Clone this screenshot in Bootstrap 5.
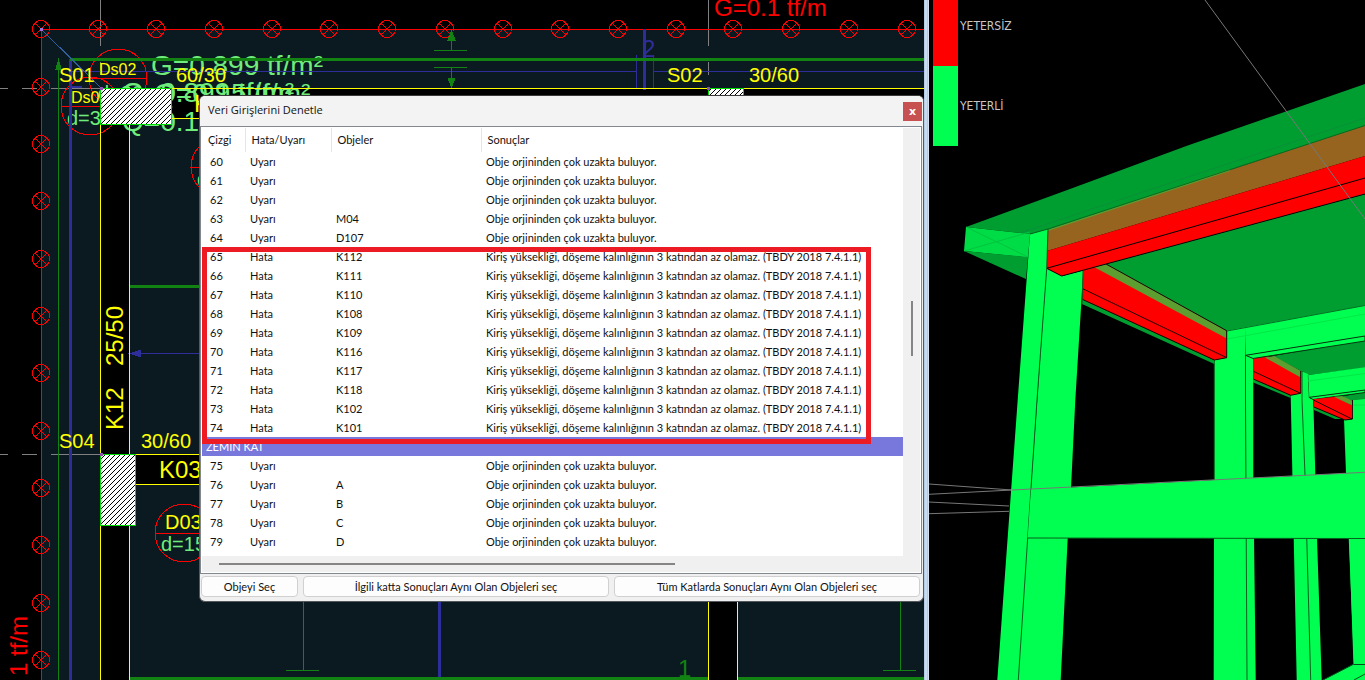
<!DOCTYPE html>
<html lang="tr">
<head>
<meta charset="utf-8">
<meta name="viewport" content="width=device-width, initial-scale=1">
<title>Veri Girişlerini Denetle</title>
<link href="https://cdn.jsdelivr.net/npm/bootstrap@5.3.0/dist/css/bootstrap.min.css" rel="stylesheet">
<script src="https://cdn.jsdelivr.net/npm/bootstrap@5.3.0/dist/js/bootstrap.bundle.min.js"></script>
<style>
body { background: #000; font-family: Lato, "Liberation Sans", sans-serif; }
.workspace { display: grid; grid-template-columns: 924fr 5px 436fr; }
.workspace svg { font-family: "Liberation Sans", Arial, sans-serif; }
.splitter { background: linear-gradient(90deg, #b4cbe4 0 1px, #c9dbee 1px 3px, #b4c9e0 3px 4px, #d3e1f0 4px); }
.pane-view { min-width: 0; }

/* model legend */
.legend { top: 0; left: 4px; color: #c8c8c8; font: 12px/16px "DejaVu Sans Condensed", "DejaVu Sans", sans-serif; }
.legend-row { display: flex; gap: 2px; }
.swatch { width: 25px; }
.swatch-bad { height: 66px; background: #f00; }
.swatch-ok { height: 80px; background: #00ff50; }
.legend-bad { padding-top: 18px; }
.legend-ok { padding-top: 32px; }

/* check dialog */
.check-dialog { top: 95px; left: 199px; right: 0; background: #f0f0f0; border: 1px solid #55585c; border-top-color: #3a3a3a; border-radius: 6px; overflow: hidden; color: #111; font-size: 11px; }
.title-bar { height: 30px; background: #f3f3f3; padding: 0 1px 0 8px; }
.title-bar h1 { margin: 0; font: 11px/28px "Open Sans", sans-serif; }
.close-btn { width: 19px; height: 19px; margin-top: 6px; border: 0; border-radius: 0; padding: 0; background: #c75050; color: #fff; font: bold 11px/17px "DejaVu Sans", sans-serif; }
.list-box { margin-right: 1px; border: 1px solid #828790; background: #fff; padding: 1px; }
.scroll-v { width: 17px; background: #f0f0f0; padding: 173px 0 0 8px; }
.scroll-v span { display: block; width: 2px; height: 55px; background: #858585; }
.scroll-h { height: 16px; background: #f0f0f0; padding: 7px 0 0 17px; }
.scroll-h span { display: block; width: 65%; height: 2px; background: #858585; }
.data-grid { table-layout: fixed; margin: 0; color: #111; height: 428px; }
.data-grid > :not(caption) > * > * { padding: 0 0 0 5px; border: 0; line-height: 19px; height: 19px; background: none; white-space: nowrap; box-shadow: none; color: inherit; }
.data-grid > thead > tr > th { height: 24px; line-height: 24px; font-weight: 400; padding-left: 6px; border-left: 1px solid #e5e5e5; }
.data-grid > thead > tr > th:first-child { border-left: 0; }
.data-grid > tbody > tr > td:first-child { padding-left: 8px; }
.data-grid > tbody > tr.floor-row > th { background: #7878dc; color: #fff; font-weight: 400; padding-left: 4px; }
.data-grid > tbody > tr.spacer-row > td { height: 5px; line-height: 5px; }
.error-frame { top: 120px; left: 1px; right: 50px; height: 197px; border: 5px solid #ed1c24; pointer-events: none; }
.actions { display: grid; grid-template-columns: 97px 1fr 1fr; gap: 5px; padding: 2px 3px 4px 1px; }
.action-btn { height: 21px; padding: 0; border: 1px solid #d0d0d0; border-radius: 4px; background: #fdfdfd; color: #111; font-size: 11px; line-height: 19px; white-space: nowrap; }
</style>
</head>
<body>
<main class="workspace vh-100 overflow-hidden">

<section class="pane-view position-relative" aria-label="Plan">
<svg class="d-block w-100 h-100" viewBox="0 0 924 680" preserveAspectRatio="xMinYMin slice" shape-rendering="crispEdges">
  <defs>
    <pattern id="hatch" width="5" height="5" patternUnits="userSpaceOnUse">
      <rect width="5" height="5" fill="#fff"/><path d="M-1 6L6-1M-1 1L1-1M4 6L6 4" stroke="#000"/>
    </pattern>
    <g id="load" fill="none" stroke="#f00"><circle r="8.5"/><path d="M-6-6L6 6M6-6L-6 6"/></g>
  </defs>
  <rect width="924" height="680" fill="#000"/>
  <path d="M41 29H924V680H41Z" fill="#0b1a20"/>
  <!-- beams -->
  <path d="M100 88H924V118H129V680H100ZM129 454H220V484H129ZM708 590H737V680H708Z" fill="#000"/>
  <!-- axes -->
  <path d="M100.500 0V46M100.500 62V75M708.500 0V46M708.500 62V75M0 88.500H8M22 88.500H37M51 88.500H100M0 454.500H8M22 454.500H37M51 454.500H100" stroke="#808080" fill="none"/>
  <path d="M41.500 29V680M41 29.500H924" stroke="#f00"/>
  <g>
    <use href="#load" x="41" y="29"/><use href="#load" x="98" y="29"/><use href="#load" x="156" y="29"/><use href="#load" x="214" y="29"/><use href="#load" x="272" y="29"/><use href="#load" x="329" y="29"/><use href="#load" x="387" y="29"/><use href="#load" x="445" y="29"/><use href="#load" x="503" y="29"/><use href="#load" x="560" y="29"/><use href="#load" x="618" y="29"/><use href="#load" x="676" y="29"/><use href="#load" x="733" y="29"/><use href="#load" x="791" y="29"/><use href="#load" x="849" y="29"/><use href="#load" x="907" y="29"/>
    <use href="#load" x="41" y="87"/><use href="#load" x="41" y="144"/><use href="#load" x="41" y="201"/><use href="#load" x="41" y="259"/><use href="#load" x="41" y="316"/><use href="#load" x="41" y="373"/><use href="#load" x="41" y="431"/><use href="#load" x="41" y="488"/><use href="#load" x="41" y="545"/><use href="#load" x="41" y="603"/><use href="#load" x="41" y="660"/>
  </g>
  <!-- slab labels -->
  <g fill="#70ec7c">
    <text x="151" y="75" font-size="28">G=0.899 tf/m²</text>
    <text x="122" y="102" font-size="28">G=0.899 tf/m²</text>
    <text x="154" y="103" font-size="28">Q=0.15 tf/m²</text>
    <text x="122" y="131" font-size="28">Q=0.15</text>
    <text x="98" y="100" font-size="20">d=30</text>
    <text x="67" y="125" font-size="20">d=30</text>
    <text x="161" y="551" font-size="20">d=15</text>
    <text x="197" y="186" font-size="20">d=15</text>
  </g>
  <g fill="none" stroke="#f00">
    <circle cx="118" cy="78" r="29"/><circle cx="90" cy="106" r="29"/><circle cx="184" cy="533" r="29"/><circle cx="220" cy="167" r="29"/>
    <path d="M89 78.500H147M61 106.500H119M155 533.500H213M190 167.500H240"/>
  </g>
  <!-- reinforcement lines -->
  <g fill="none" stroke="#2e2e9a">
    <path d="M70.500 59V680" stroke-width="3"/><path d="M644.500 29V90M439.500 590V680" stroke-width="3"/>
    <path d="M70 71.500H636M653 71.500H924M636.500 55V88M653.500 55V88M129 353.500H210"/>
    <path d="M70 87H82" stroke-width="2"/><path d="M130 353.500L140 350.500V356.500Z" fill="#2e2e9a"/>
  </g>
  <g fill="none" stroke="#128212">
    <path d="M70 59.500H924M129 286.500H210M129 678.500H708M737 678.500H924" stroke-width="3"/>
    <path d="M58.500 62V680M434 50.500H467M434 67.500H467M451.500 32V50M451.500 67V88M303.500 600V670M286 670.500H319M900.500 600V670M883 670.500H916"/>
    <path d="M58.500 60L56 69H61ZM451.500 31L448 40H455ZM451.500 87L448 78H455Z" fill="#128212"/>
  </g>
  <path d="M41 29L101 88" stroke="#3060a0"/>
  <rect x="40" y="28" width="3" height="3" fill="#a070e0"/>
  <!-- beam outlines -->
  <path d="M172 88.500H924M172 118.500H924M100.500 124V680M129.500 124V680M129 454.500H220M129 484.500H220M708.500 590V680M737.500 590V680" fill="none" stroke="#ff0"/>
  <g fill="url(#hatch)" stroke="#00e000"><rect x="100.500" y="88.500" width="71" height="36"/><rect x="100.500" y="454.500" width="35" height="71"/><rect x="708.500" y="88.500" width="35" height="36"/></g>
  <path d="M100 87h3v3h-3zM100 453h3v3h-3zM707 87h3v3h-3z" fill="#9050b0"/>
  <g fill="#ff0" font-size="20">
    <text x="59" y="82">S01</text><text x="176" y="82">60/30</text><text x="667" y="82">S02</text><text x="749" y="82">30/60</text>
    <text x="59" y="448">S04</text><text x="141" y="448">30/60</text><text x="165" y="529">D03</text>
    <text x="99" y="75" font-size="16">Ds02</text><text x="71" y="103" font-size="16">Ds0</text>
    <text x="159" y="478" font-size="24">K03</text><text x="194" y="112" font-size="24">K01</text>
    <text transform="translate(123 430) rotate(-90)" font-size="24">K12</text>
    <text transform="translate(123 366) rotate(-90)" font-size="24">25/50</text>
  </g>
  <text x="642" y="57" font-size="24" fill="#2e2e9a">2</text>
  <text x="678" y="677" font-size="24" fill="#128212">1</text>
  <g fill="#f00" font-size="24"><text x="714" y="16">G=0.1 tf/m</text><text transform="translate(27 676) rotate(-90)">1 tf/m</text></g>
</svg>

<div class="check-dialog position-absolute" role="dialog" aria-labelledby="dlgTitle">
  <div class="title-bar d-flex justify-content-between align-items-start">
    <h1 id="dlgTitle">Veri Girişlerini Denetle</h1>
    <button type="button" class="close-btn" aria-label="Kapat">x</button>
  </div>
  <div class="list-box position-relative">
    <div class="d-flex">
      <table class="table data-grid flex-grow-1">
        <colgroup><col style="width:43px"><col style="width:86px"><col style="width:150px"><col></colgroup>
        <thead><tr><th scope="col">Çizgi</th><th scope="col">Hata/Uyarı</th><th scope="col">Objeler</th><th scope="col">Sonuçlar</th></tr></thead>
        <tbody>
          <tr><td>60</td><td>Uyarı</td><td></td><td>Obje orjininden çok uzakta buluyor.</td></tr>
          <tr><td>61</td><td>Uyarı</td><td></td><td>Obje orjininden çok uzakta buluyor.</td></tr>
          <tr><td>62</td><td>Uyarı</td><td></td><td>Obje orjininden çok uzakta buluyor.</td></tr>
          <tr><td>63</td><td>Uyarı</td><td>M04</td><td>Obje orjininden çok uzakta buluyor.</td></tr>
          <tr><td>64</td><td>Uyarı</td><td>D107</td><td>Obje orjininden çok uzakta buluyor.</td></tr>
          <tr><td>65</td><td>Hata</td><td>K112</td><td>Kiriş yüksekliği, döşeme kalınlığının 3 katından az olamaz. (TBDY 2018 7.4.1.1)</td></tr>
          <tr><td>66</td><td>Hata</td><td>K111</td><td>Kiriş yüksekliği, döşeme kalınlığının 3 katından az olamaz. (TBDY 2018 7.4.1.1)</td></tr>
          <tr><td>67</td><td>Hata</td><td>K110</td><td>Kiriş yüksekliği, döşeme kalınlığının 3 katından az olamaz. (TBDY 2018 7.4.1.1)</td></tr>
          <tr><td>68</td><td>Hata</td><td>K108</td><td>Kiriş yüksekliği, döşeme kalınlığının 3 katından az olamaz. (TBDY 2018 7.4.1.1)</td></tr>
          <tr><td>69</td><td>Hata</td><td>K109</td><td>Kiriş yüksekliği, döşeme kalınlığının 3 katından az olamaz. (TBDY 2018 7.4.1.1)</td></tr>
          <tr><td>70</td><td>Hata</td><td>K116</td><td>Kiriş yüksekliği, döşeme kalınlığının 3 katından az olamaz. (TBDY 2018 7.4.1.1)</td></tr>
          <tr><td>71</td><td>Hata</td><td>K117</td><td>Kiriş yüksekliği, döşeme kalınlığının 3 katından az olamaz. (TBDY 2018 7.4.1.1)</td></tr>
          <tr><td>72</td><td>Hata</td><td>K118</td><td>Kiriş yüksekliği, döşeme kalınlığının 3 katından az olamaz. (TBDY 2018 7.4.1.1)</td></tr>
          <tr><td>73</td><td>Hata</td><td>K102</td><td>Kiriş yüksekliği, döşeme kalınlığının 3 katından az olamaz. (TBDY 2018 7.4.1.1)</td></tr>
          <tr><td>74</td><td>Hata</td><td>K101</td><td>Kiriş yüksekliği, döşeme kalınlığının 3 katından az olamaz. (TBDY 2018 7.4.1.1)</td></tr>
          <tr class="floor-row"><th colspan="4">ZEMİN KAT</th></tr>
          <tr><td>75</td><td>Uyarı</td><td></td><td>Obje orjininden çok uzakta buluyor.</td></tr>
          <tr><td>76</td><td>Uyarı</td><td>A</td><td>Obje orjininden çok uzakta buluyor.</td></tr>
          <tr><td>77</td><td>Uyarı</td><td>B</td><td>Obje orjininden çok uzakta buluyor.</td></tr>
          <tr><td>78</td><td>Uyarı</td><td>C</td><td>Obje orjininden çok uzakta buluyor.</td></tr>
          <tr><td>79</td><td>Uyarı</td><td>D</td><td>Obje orjininden çok uzakta buluyor.</td></tr>
          <tr class="spacer-row"><td colspan="4"></td></tr>
        </tbody>
      </table>
      <div class="scroll-v flex-shrink-0"><span></span></div>
    </div>
    <div class="scroll-h"><span></span></div>
    <div class="error-frame position-absolute"></div>
  </div>
  <div class="actions">
    <button type="button" class="btn action-btn">Objeyi Seç</button>
    <button type="button" class="btn action-btn">İlgili katta Sonuçları Aynı Olan Objeleri seç</button>
    <button type="button" class="btn action-btn">Tüm Katlarda Sonuçları Aynı Olan Objeleri seç</button>
  </div>
</div>
</section>

<div class="splitter"></div>

<section class="pane-view position-relative" aria-label="Model">
<svg class="d-block w-100 h-100" viewBox="929 0 436 680" preserveAspectRatio="xMinYMin slice">
  <rect x="929" width="436" height="680" fill="#000"/>
  <g stroke="#777"><path d="M929 484L1012 490L929 494.300M929 502L1009 506M929 513.700L1009 511.300" fill="none"/></g>
  <!-- top slab -->
  <path d="M966 227L1070 189L1187 145.700L1365 84V126L1048 230L1030 234Z" fill="#009e30"/>
  <path d="M1020 233L1365 118" stroke="#0a9038"/>
  <path d="M1048 230L1365 125.500V156L1047 251Z" fill="#96641e"/>
  <path d="M1048 229.500L1230 169V171L1048 231Z" fill="#5c9e30"/>
  <path d="M1048 229L1365 125.500" stroke="#066a20"/>
  <path d="M966 227L1030 234L1028 257.500L964 251Z" fill="#00dc46"/>
  <path d="M966 227L1028 257M964 251L1030 232" stroke="#00c440" fill="none"/>
  <path d="M964 251L1028 257L1026 279Z" fill="#009e30"/>
  <!-- lower slabs -->
  <path d="M1061 275L1365 194V306L1227 331L1105 264Z" fill="#009e30"/>
  <path d="M1273 356L1365 340V368L1308 375L1301 371Z" fill="#009e30"/>
  <path d="M1340 397L1365 392V400L1352 400.500Z" fill="#009e30"/>
  <!-- far columns -->
  <path d="M1345 419L1352 418V400.500L1365 399V680H1354Z" fill="#00ff50"/>
  <path d="M1344 419L1346 473L1348.700 538L1354 664L1323 680H1365V400H1352V419Z" fill="#00ff50"/>
  <path d="M1354 664.500H1365M1354 680L1365 674M1354 664L1323 680" stroke="#044f18" fill="none"/>
  <path d="M1352 405H1365" stroke="#00e848"/>
  <path d="M1290.700 395L1301 393V371L1308.300 374.300L1309.300 398L1313.300 399.500L1315.300 475L1317 538L1321.700 680H1296.700L1293.700 538Z" fill="#00ff50"/>
  <path d="M1302 371V400L1305 475L1310.700 680M1308.300 375L1309.300 398" stroke="#045f1c" fill="none"/>
  <path d="M1308.300 375L1365 367.300V390L1309.300 397.300Z" fill="#00ff50"/>
  <path d="M1309.300 397.300L1365 390V392.500L1313 399.500Z" fill="#00ff50" stroke="#033810"/>
  <path d="M1308 381L1365 373.500" stroke="#00e848"/>
  <path d="M1313.300 399.300L1336 396.700L1352 405.500V419L1345 420L1314 407Z" fill="#f00"/>
  <path d="M1334 396.700L1342 396L1352 400.500V405.500Z" fill="#5c9e30"/>
  <path d="M1314 407L1343 419H1335L1314 410Z" fill="#009e30"/>
  <path d="M1313.300 400L1352 419M1314 407L1345 420L1352.500 419V400" stroke="#200" fill="none"/>
  <!-- middle bay -->
  <path d="M1253.300 358.300L1268 356L1301 377.700V393.300L1290.700 395.300L1253.300 379Z" fill="#f00"/>
  <path d="M1265 357.500L1274 356L1301 371V377.700Z" fill="#5c9e30"/>
  <path d="M1253.300 379L1290.700 395.300V398L1253.300 382.500Z" fill="#009e30"/>
  <path d="M1253.300 371.300L1300.500 393.300L1290.700 395.300L1253.300 379M1300.700 371V393" stroke="#200" fill="none"/>
  <path d="M1214.300 360L1226.700 357.700V330.700L1245 327.300V355.300L1253.300 358.500V475L1255.700 680H1213.700Z" fill="#00ff50"/>
  <path d="M1245.500 327V400L1247 680M1214.300 360V480" stroke="#045f1c" fill="none"/>
  <path d="M1245 327.300L1365 305.500V336L1245.700 355.300Z" fill="#00ff50"/>
  <path d="M1245.700 355.300L1365 336V341L1253 358.500Z" fill="#00ff50" stroke="#033810"/>
  <path d="M1227 339L1365 314" stroke="#00e848"/>
  <path d="M1227 331L1365 305.500" stroke="#057024"/>
  <!-- near bay -->
  <path d="M1083 269L1095 266L1226.700 338V357.700L1214.300 360L1082.300 299.300Z" fill="#f00"/>
  <path d="M1094 267L1106 264L1226.700 330.700V338.500Z" fill="#5c9e30"/>
  <path d="M1082.300 299.300L1214.300 360V364L1082 304Z" fill="#009e30"/>
  <path d="M1082.700 288.700L1226.700 357.700L1214.300 360L1082.300 299.300M1226.700 331V357.700M1106 264L1226.700 330.700" stroke="#200" fill="none"/>
  <path d="M1046.700 268L1062 276L1083.300 270.500L1075.300 400L1071 488L1067.700 538L1060.700 680H1015L1031 488Z" fill="#00ff50"/>
  <path d="M1047 251L1365 156V194L1061.700 276L1046.700 268.300Z" fill="#f00"/>
  <path d="M1365 194L1061.700 276L1046.700 268.300L1365 178" stroke="#000" fill="none"/>
  <path d="M1030 234L1048 229L1046.700 269L1037 400L1031 488L1018.300 680H997.300L1017.700 400Z" fill="#00ff50"/>
  <path d="M1030 234L1048 229L1046.700 269L1037 400L1031 488L1018.300 680M1083 271L1082 304" stroke="#045f1c" fill="none"/>
  <!-- floor beam -->
  <path d="M1031 489.500L1365 472.300V538.500L1027.700 538Z" fill="#00ff50"/>
  <path d="M1027.700 538L1365 538.500" stroke="#045f1c"/>
  <path d="M1012 490L1365 472.300M1205 0L1365 219" stroke="#777" fill="none"/>
</svg>
<div class="legend position-absolute">
  <div class="legend-row"><div class="swatch swatch-bad"></div><div class="legend-bad">YETERSİZ</div></div>
  <div class="legend-row"><div class="swatch swatch-ok"></div><div class="legend-ok">YETERLİ</div></div>
</div>
</section>
</main>
</body>
</html>
